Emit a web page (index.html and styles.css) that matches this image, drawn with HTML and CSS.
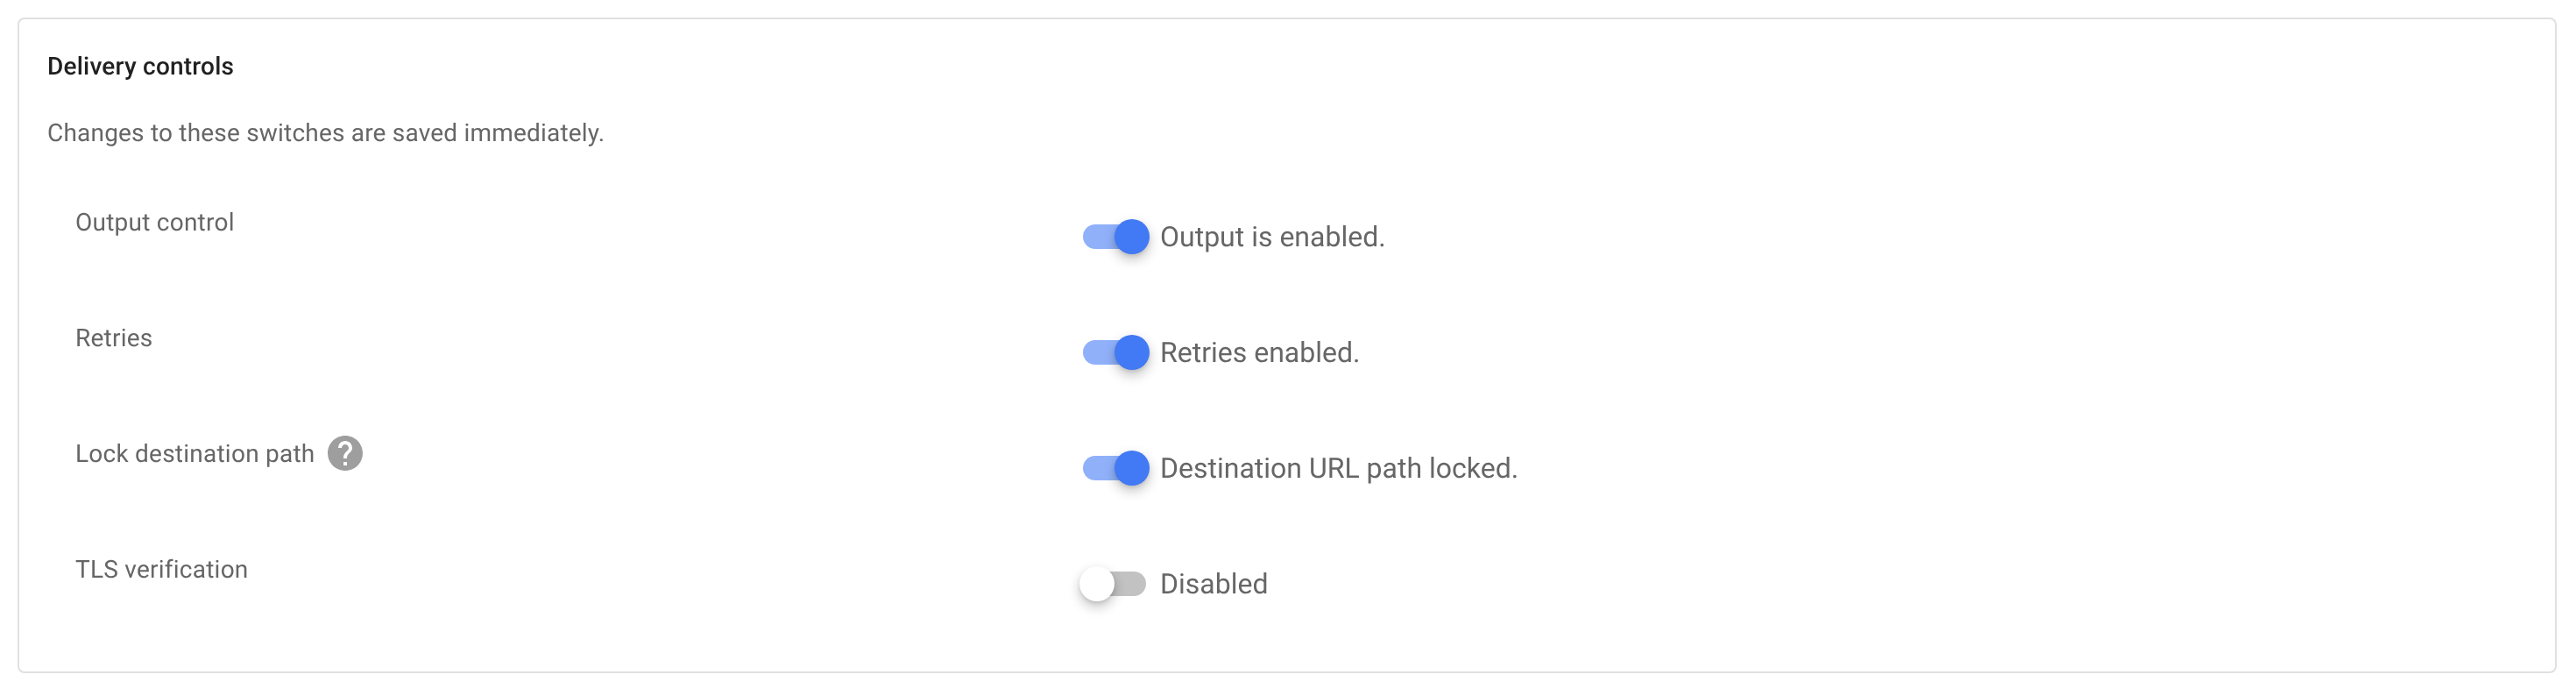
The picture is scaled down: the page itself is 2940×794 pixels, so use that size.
FILE: index.html
```html
<!DOCTYPE html>
<html lang="en">
<head>
<meta charset="utf-8">
<title>Delivery controls</title>
<link rel="stylesheet" href="styles.css">
</head>
<body>
<section class="card">
  <h2 class="title">Delivery controls</h2>
  <p class="subtitle">Changes to these switches are saved immediately.</p>
  <div class="rows">
    <div class="row">
      <div class="label">Output control</div>
      <div class="control">
        <span class="switch on"><span class="track"></span><span class="thumb"></span></span>
        <span class="state">Output is enabled.</span>
      </div>
    </div>
    <div class="row">
      <div class="label">Retries</div>
      <div class="control">
        <span class="switch on"><span class="track"></span><span class="thumb"></span></span>
        <span class="state">Retries enabled.</span>
      </div>
    </div>
    <div class="row">
      <div class="label">Lock destination path
        <svg class="help" viewBox="0 0 24 24" aria-hidden="true"><path d="M12 2C6.48 2 2 6.48 2 12s4.48 10 10 10 10-4.48 10-10S17.52 2 12 2zm1 17h-2v-2h2v2zm2.07-7.75l-.9.92C13.45 12.9 13 13.5 13 15h-2v-.5c0-1.1.45-2.1 1.17-2.83l1.24-1.26c.37-.36.59-.86.59-1.41 0-1.1-.9-2-2-2s-2 .9-2 2H8c0-2.21 1.79-4 4-4s4 1.79 4 4c0 .88-.36 1.68-.93 2.25z"/></svg>
      </div>
      <div class="control">
        <span class="switch on"><span class="track"></span><span class="thumb"></span></span>
        <span class="state">Destination URL path locked.</span>
      </div>
    </div>
    <div class="row">
      <div class="label">TLS verification</div>
      <div class="control">
        <span class="switch"><span class="track"></span><span class="thumb"></span></span>
        <span class="state">Disabled</span>
      </div>
    </div>
  </div>
</section>
</body>
</html>
```

FILE: styles.css
```css
* { box-sizing: border-box; }
html, body { background: #fff; }
body {
  margin: 0;
  padding: 20px 22px 0 20px;
  font-family: Roboto, "Liberation Sans", sans-serif;
  color: #666;
  text-rendering: geometricPrecision;
  -webkit-font-smoothing: antialiased;
}
.card {
  height: 748px;
  border: 2px solid #e0e0e0;
  border-radius: 8px;
  padding: 32px 32px 0;
  will-change: opacity;
}
.title {
  margin: 0;
  font-size: 28px;
  line-height: 44px;
  font-weight: 500;
  letter-spacing: .22px;
  color: #212121;
}
.subtitle {
  margin: 32px 0 0;
  font-size: 28px;
  line-height: 44px;
  font-weight: 400;
  letter-spacing: .2px;
}
.rows { margin-top: 32px; }
.row {
  display: grid;
  grid-template-columns: 1146px 1fr;
  height: 132px;
  padding-left: 32px;
}
.label {
  display: flex;
  align-items: center;
  height: 40px;
  font-size: 28px;
  letter-spacing: .24px;
  margin-top: 27px;
}
.help {
  width: 48px;
  height: 48px;
  margin-left: 10px;
  fill: #9e9e9e;
  flex: none;
}
.control {
  display: flex;
  align-items: center;
  height: 48px;
  margin-top: 40px;
  font-size: 32px;
}
.switch {
  position: relative;
  display: block;
  width: 80px;
  height: 48px;
  margin-right: 12px;
  flex: none;
}
.track {
  position: absolute;
  left: 4px;
  top: 10px;
  width: 72px;
  height: 28px;
  border-radius: 14px;
  background: #c2c2c2;
}
.thumb {
  position: absolute;
  left: 0;
  top: 4px;
  width: 40px;
  height: 40px;
  border-radius: 50%;
  background: #fff;
  box-shadow: 0 6px 14px rgba(0,0,0,.24), 0 2px 4px rgba(0,0,0,.1);
}
.on .track { background: #90b1fa; }
.on .thumb { left: 40px; background: #4279f4; }
```
